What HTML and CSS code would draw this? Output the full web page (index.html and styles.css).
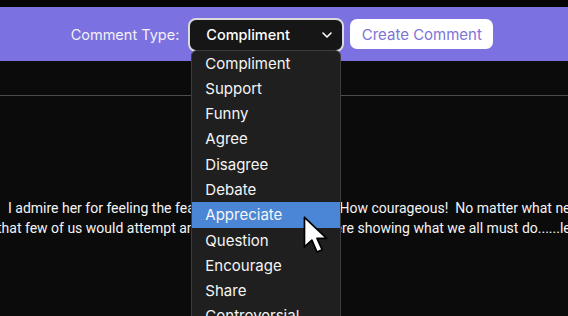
FILE: index.html
```html
<!DOCTYPE html>
<html lang="en">
<head>
  <meta charset="UTF-8" />
  <title>Comments</title>
  <link rel="stylesheet" href="styles.css">
</head>
<body>
  <div class="topbar"></div>
  <div class="toolbar">
    <label class="type-label">Comment Type:</label>
    <div class="select">
      <span>Compliment</span>
      <svg class="chevron" width="10" height="6" viewBox="0 0 10 6"><path d="M1 1l4 4 4-4" fill="none" stroke="#fff" stroke-width="1.6" stroke-linecap="round" stroke-linejoin="round"/></svg>
      <ul class="options">
        <li>Compliment</li>
        <li>Support</li>
        <li>Funny</li>
        <li>Agree</li>
        <li>Disagree</li>
        <li>Debate</li>
        <li class="active">Appreciate</li>
        <li>Question</li>
        <li>Encourage</li>
        <li>Share</li>
        <li>Controversial</li>
      </ul>
    </div>
    <button class="create">Create Comment</button>
  </div>
  <div class="divider"></div>
  <div class="comment">
    <div class="line first">I admire her for feeling the fear and doing it anyway.&nbsp;&nbsp; How courageous!&nbsp; No matter what needs to be done</div>
    <div class="line second">that few of us would attempt and yet here she is out there showing what we all must do......lead</div>
  </div>
  <svg class="cursor" width="30" height="41" viewBox="0 0 26 36">
    <path d="M2 2 L2 28 L8.5 22 L13 32.5 L17.5 30.5 L13 20.5 L21.5 20.5 Z" fill="#fff" stroke="#000" stroke-width="1.5" stroke-linejoin="round"/>
  </svg>
</body>
</html>
```
FILE: styles.css
```css
body {
  margin: 0;
  background: #0b0b0c;
  font-family: Inter, "Noto Sans", sans-serif;
  overflow: hidden;
  position: relative;
  height: 316px;
}
.topbar {
  height: 7px;
  background: #050505;
}
.toolbar {
  height: 54px;
  background: #7b71e0;
  display: flex;
  align-items: center;
  justify-content: center;
  gap: 9px;
  padding-right: 4px;
}
.type-label {
  color: #f2f2f7;
  font-size: 14.5px;
}
.select {
  position: relative;
  width: 136px;
  height: 30px;
  border: 2px solid #d9d9de;
  border-radius: 8px;
  background: #161617;
  color: #fff;
  font-size: 14.5px;
  font-weight: 500;
  display: flex;
  align-items: center;
  padding-left: 16px;
  margin-top: 1px;
}
.chevron {
  margin-left: auto;
  margin-right: 10px;
}
.options {
  position: absolute;
  top: 30px;
  left: 1px;
  width: 148px;
  margin: 0;
  padding: 0;
  list-style: none;
  background: #1f1f20;
  border: 1px solid #3c3c3e;
  border-radius: 6px 6px 0 0;
  font-size: 15px;
  font-weight: 400;
  z-index: 2;
}
.options li {
  height: 25.3px;
  line-height: 25px;
  padding-left: 13px;
  color: #f5f5f5;
}
.options li.active {
  background: #4b86d6;
}
.create {
  margin-left: -3px;
  width: 143px;
  height: 30px;
  border: none;
  border-radius: 7px;
  background: #fff;
  color: #7d74d8;
  font-family: inherit;
  font-size: 15px;
}
.divider {
  height: 34px;
  border-bottom: 1px solid #4d4d50;
}
.comment {
  padding-top: 102px;
  font-family: Roboto, sans-serif;
  font-size: 14px;
  line-height: 20px;
  color: #f4f4f4;
  white-space: nowrap;
}
.first {
  padding-left: 8px;
}
.second {
  margin-left: -3px;
}
.cursor {
  position: absolute;
  left: 302px;
  top: 215px;
  z-index: 3;
}
```
